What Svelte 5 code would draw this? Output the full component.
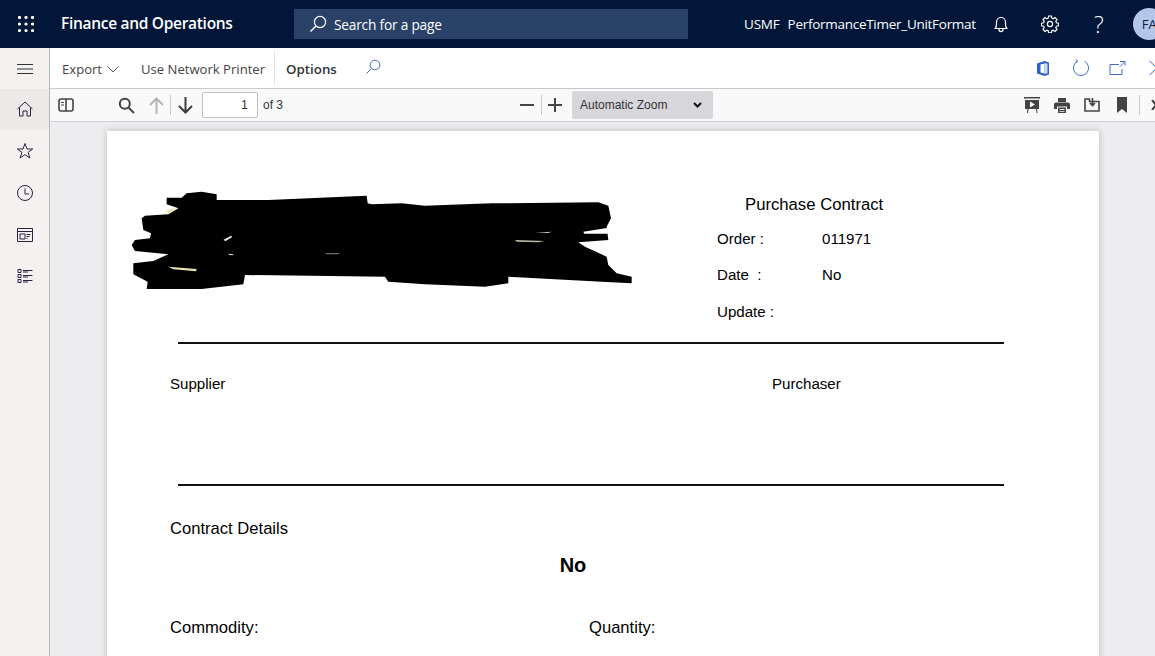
<script>
  const railIcons = ['home', 'star', 'clock', 'card', 'list'];
</script>

<div class="shell">
  <header class="topbar">
    <button class="waffle" aria-label="Apps">
      <svg width="16" height="16" viewBox="0 0 16 16" fill="#fff">
        {#each [1.5, 8, 14.5] as y}
          {#each [1.5, 8, 14.5] as x}
            <circle cx={x} cy={y} r="1.6" />
          {/each}
        {/each}
      </svg>
    </button>
    <div class="brand">Finance and Operations</div>
    <div class="search">
      <svg width="18" height="18" viewBox="0 0 18 18" fill="none" stroke="#fff" stroke-width="1.2">
        <circle cx="11" cy="7" r="5.6" />
        <path d="M7 11 1.5 16.5" stroke-width="1.5" />
      </svg>
      <span>Search for a page</span>
    </div>
    <div class="legal">USMF</div>
    <div class="report">PerformanceTimer_UnitFormat</div>
    <svg class="bell" width="16" height="18" viewBox="0 0 16 18" fill="none" stroke="#fff" stroke-width="1.2">
      <path d="M2.2 13.5c1-1.2 1.3-2.2 1.3-4.5V7a4.5 4.5 0 0 1 9 0v2c0 2.3.3 3.3 1.3 4.5z" />
      <path d="M6 14v.6a2 2 0 0 0 4 0V14" />
    </svg>
    <svg class="gear" width="18" height="18" viewBox="0 0 18 18" fill="none" stroke="#fff" stroke-width="1.2">
      <circle cx="9" cy="9" r="2.6" />
      <path d="M7.6 1h2.8l.4 2.2 1.4.6L14 2.6l2 2-1.2 1.8.6 1.4 2.1.4v2.6l-2.1.4-.6 1.4 1.2 1.8-2 2-1.8-1.2-1.4.6-.4 2.1H7.6l-.4-2.1-1.4-.6L4 16.4l-2-2 1.2-1.8-.6-1.4-2.1-.4V8.200l2.100-.4.6-1.400L2 4.600l2-2 1.800 1.200 1.400-.6z" />
    </svg>
    <div class="help">?</div>
    <div class="avatar">FA</div>
  </header>

  <div class="body">
    <nav class="rail">
      <button class="hamburger" aria-label="Menu">
        <svg width="16" height="10" viewBox="0 0 16 10" stroke="#333" stroke-width="1"><path d="M0 .5h16M0 5h16M0 9.500h16" /></svg>
      </button>
      {#each railIcons as icon, i}
        <div class="rail-item" class:active={i === 0}>
          <svg width="18" height="18" viewBox="0 0 18 18" fill="none" stroke="#2b2240" stroke-width="1">
            {#if icon === 'home'}
              <path d="M1.500 9 9 2l7.500 7M3.500 7.500V16H7v-5h4v5h3.500V7.500" />
            {:else if icon === 'star'}
              <path d="M9 1.500 11 7h5.700l-4.600 3.400 1.800 5.600L9 12.600 4.100 16l1.800-5.600L1.300 7H7z" />
            {:else if icon === 'clock'}
              <circle cx="9" cy="9" r="7.500" /><path d="M9 4.500V10h4" />
            {:else if icon === 'card'}
              <path d="M1.500 2.500h15v13h-15zM1.500 5.500h15M4 8h5v5H4zM10.500 8.500h4M10.500 10.500h3M10.500 12.500h1" />
            {:else}
              <path d="M2 2.500h3v3H2zM2 7.500h3v3H2zM2 12.500h3v3H2zM7 3.500h9.500M7 5h5M7 8.500h9.500M7 10h5M7 13.500h9.500M7 15h5" />
            {/if}
          </svg>
        </div>
      {/each}
    </nav>

    <main class="content">
      <div class="cmdbar">
        <div class="cmd export">Export
          <svg width="12" height="7" viewBox="0 0 12 7" fill="none" stroke="#555" stroke-width="1"><path d="M.5.500 6 6l5.500-5.500" /></svg>
        </div>
        <div class="cmd printer">Use Network Printer</div>
        <div class="cmd options">Options</div>
        <svg class="findicon" width="16" height="16" viewBox="0 0 16 16" fill="none" stroke="#4a6fc0" stroke-width="1">
          <circle cx="10" cy="6" r="4.800" /><path d="M6.500 9.500 1.500 14.500" />
        </svg>
        <div class="grow"></div>
        <svg class="acticon office" width="12" height="15" viewBox="0 0 12 15">
          <path d="M0 2.500 7.500 0 12 1.500v12L7.500 15 0 12.500z" fill="#2b62c4" />
          <path d="M3.500 3.500 7.500 2.500v10l-4-1z" fill="#fff" />
          <path d="M7.500 2l3 .8v9.400l-3 .8z" fill="#cddcf3" />
        </svg>
        <svg class="acticon refresh" width="18" height="18" viewBox="0 0 18 18" fill="none" stroke="#3f6fca" stroke-width="1">
          <path d="M5.500 2.200a7.600 7.600 0 1 0 7 0" /><path d="M4.500 .5 5.700 2.400 3.600 3.400" />
        </svg>
        <svg class="acticon popout" width="17" height="15" viewBox="0 0 17 15" fill="none" stroke="#3f6fca" stroke-width="1">
          <path d="M10 3.500H1v10h12V8M11 .5h5v4M16 .5l-5 5" />
        </svg>
        <svg class="closeicon" width="8" height="16" viewBox="0 0 8 16" fill="none" stroke="#3f6fca" stroke-width="1"><path d="M.5 1 8 8 .5 15" /></svg>
      </div>

      <div class="pdfbar">
        <svg class="p-side" width="16" height="14" viewBox="0 0 16 14" fill="none" stroke="#444" stroke-width="1.600">
          <rect x="1" y="1" width="14" height="12" rx="2" /><path d="M8 1v12" /><path d="M3 4.500h3M3 7h3" stroke-width="1" />
        </svg>
        <svg class="p-find" width="17" height="17" viewBox="0 0 17 17" fill="none" stroke="#444" stroke-width="2">
          <circle cx="6.800" cy="6.800" r="5" /><path d="m10.500 10.500 5.500 5.500" />
        </svg>
        <svg class="p-up" width="15" height="17" viewBox="0 0 15 17" fill="none" stroke="#b4b4b6" stroke-width="2"><path d="M7.500 17V2M1 8l6.500-6.500L14 8" /></svg>
        <span class="sep p-sep1"></span>
        <svg class="p-down" width="15" height="17" viewBox="0 0 15 17" fill="none" stroke="#3c3c3e" stroke-width="2"><path d="M7.500 0v15M1 9l6.500 6.500L14 9" /></svg>
        <div class="pageinput">1</div>
        <span class="ofpages">of 3</span>
        <svg class="p-minus" width="14" height="2" viewBox="0 0 14 2"><path d="M0 1h14" stroke="#444" stroke-width="2" /></svg>
        <span class="sep p-sep2"></span>
        <svg class="p-plus" width="14" height="14" viewBox="0 0 14 14" stroke="#444" stroke-width="2"><path d="M0 7h14M7 0v14" /></svg>
        <div class="zoom">
          <span>Automatic Zoom</span>
          <svg width="9" height="6" viewBox="0 0 9 6" fill="none" stroke="#111" stroke-width="2"><path d="m1 1 3.500 3.500L8 1" /></svg>
        </div>
        <div class="grow"></div>
        <svg class="p-tool" width="16" height="16" viewBox="0 0 16 16" fill="#444">
          <path d="M0 0h16v1.500H0zM1 3h14v9H1zM3 14l.5-2h1L4 16H3zM12 12h1l.5 4h-1z" /><path d="m6 4.500 5 3-5 3z" fill="#f9f9fa" />
        </svg>
        <svg class="p-tool" width="16" height="15" viewBox="0 0 16 15" fill="#444">
          <path d="M4 0h8v4H4zM2 4.500h12a2 2 0 0 1 2 2V11h-3V8.500H3V11H0V6.500a2 2 0 0 1 2-2zM4 9.500h8V15H4z" />
          <path d="M5.500 11h5v1h-5zM5.500 13h5v.8h-5z" fill="#f9f9fa" />
        </svg>
        <svg class="p-tool" width="16" height="14" viewBox="0 0 16 14" fill="none" stroke="#444" stroke-width="1.600">
          <path d="M5.500 3.500H15v9.500H1V1h4.500zM8.500 0v7M6 5l2.500 2.500L11 5" />
        </svg>
        <svg class="p-mark" width="10" height="16" viewBox="0 0 10 16" fill="#444"><path d="M0 0h10v16L5 12l-5 4z" /></svg>
        <span class="sep p-sep3"></span>
        <svg class="p-x" width="8" height="10" viewBox="0 0 8 10" stroke="#333" stroke-width="2"><path d="m1 0 8 10M9 0 1 10" /></svg>
      </div>

      <div class="viewer">
        <article class="page">
          <svg class="redact" width="520" height="115" viewBox="0 0 1560 345" fill="#000">
            <path d="M125 38 170 38 185 25 230 20 275 28 275 45 430 45 725 32 728 55 740 58 830 55 900 62 1100 55 1420 52 1450 62 1458 100 1445 125 1450 165 1360 172 1380 185 1445 215 1450 240 1475 265 1520 275 1520 295 1430 290 1150 275 1150 295 1080 305 900 298 790 290 780 275 360 270 355 298 230 312 65 312 68 290 25 268 25 235 85 228 130 208 30 198 20 180 30 165 75 160 78 145 55 135 50 100 60 92 130 88 160 70 125 58Z" />
            <path d="M1375 140 1450 128 1448 146 1378 146Z" fill="#fff" />
            <path d="M130 245 215 252 213 259 145 253Z" fill="#e9dfb0" />
            <path d="M125 75 155 68 130 88Z" fill="#e9dfb0" />
            <path d="M295 165 318 152 322 156 302 168Z" fill="#f4f0de" />
            <path d="M1170 165 1260 168 1240 172 1175 170Z" fill="#bdb9a8" />
            <path d="M1230 143 1280 140 1270 144Z" fill="#cfcbb8" />
            <path d="M600 205 645 205 640 208 605 208Z" fill="#8d8b7c" />
            <path d="M310 206 325 208 325 211 312 210Z" fill="#d9d5c0" />
          </svg>

          <section class="head">
            <div class="doc">
              <h1>Purchase Contract</h1>
              <div class="field"><span>Order :</span><span>011971</span></div>
              <div class="field"><span>Date&nbsp; :</span><span>No</span></div>
              <div class="field"><span>Update :</span><span></span></div>
            </div>
          </section>
          <hr />
          <section class="parties">
            <span>Supplier</span>
            <span>Purchaser</span>
          </section>
          <hr class="second" />
          <h2>Contract Details</h2>
          <div class="no">No</div>
          <section class="terms">
            <span>Commodity:</span>
            <span>Quantity:</span>
          </section>
        </article>
      </div>
    </main>
  </div>
</div>

<style>
  :global(body) { margin: 0; overflow: hidden; }
  .shell { width: 1155px; height: 656px; display: flex; flex-direction: column; overflow: hidden; font-family: "Open Sans", "Noto Sans", sans-serif; }
  button { background: none; border: 0; padding: 0; display: flex; align-items: center; justify-content: center; }
  svg { flex: none; display: block; }
  .grow { flex: 1; }

  .topbar { height: 48px; flex: none; background: #011638; color: #fff; display: flex; align-items: center; white-space: nowrap; }
  .topbar > * { flex: none; }
  .waffle { width: 17px; margin-left: 17px; }
  .brand { margin-left: 27px; width: 233px; font-size: 15.500px; font-weight: 600; letter-spacing: -0.300px; margin-top: -2px; }
  .search { width: 394px; height: 30px; background: #2a4168; display: flex; align-items: center; box-sizing: border-box; padding-left: 15px; gap: 7px; font-size: 13.700px; letter-spacing: -0.200px; }
  .search span { margin-top: 1px; }
  .legal { margin-left: 56px; font-size: 13.500px; letter-spacing: -0.200px; }
  .report { margin-left: 8px; font-size: 13.500px; letter-spacing: -0.280px; }
  .bell { margin-left: 17px; }
  .gear { margin-left: 32px; }
  .help { margin-left: 34px; width: 12px; font-size: 23px; font-weight: 300; font-family: "Open Sans", sans-serif; text-align: center; }
  .avatar { margin-left: 28px; width: 32px; height: 32px; border-radius: 50%; background: #b4c7ea; color: #0b1d3a; font-size: 13px; line-height: 32px; text-indent: 9px; overflow: hidden; }

  .body { flex: 1; display: flex; min-height: 0; }
  .rail { width: 49px; flex: none; background: #f3f2f1; border-right: 1px solid #b9b9b9; border-left: 1px solid #3a3a44; margin-left: -1px; display: flex; flex-direction: column; }
  .hamburger { height: 42px; width: 100%; flex: none; }
  .rail-item { height: 41.750px; flex: none; display: flex; align-items: center; justify-content: center; }
  .rail-item.active { background: #ebeae9; margin-top: -1.500px; }

  .content { flex: 1; min-width: 0; display: flex; flex-direction: column; background: #ededf0; }
  .cmdbar { height: 41px; flex: none; box-sizing: border-box; background: #fff; border-bottom: 1px solid #c8c8c8; display: flex; align-items: center; color: #444; font-size: 13.100px; white-space: nowrap; }
  .cmd { display: flex; align-items: center; height: 100%; box-sizing: border-box; padding-top: 2px; }
  .export { margin-left: 12px; gap: 5px; }
  .printer { margin-left: 22px; padding-right: 10px; position: relative; }
  .printer::after { content: ""; position: absolute; right: 0; top: 3px; bottom: 3px; width: 1px; background: #e4e4e4; }
  .options { margin-left: 11px; font-size: 13.300px; font-weight: 600; color: #333; }
  .findicon { margin-left: 28px; margin-top: -2px; }
  .office { margin-right: 23px; }
  .refresh { margin-right: 19px; }
  .popout { margin-right: 23px; }
  .closeicon { margin-right: -2px; }

  .pdfbar { height: 33px; flex: none; box-sizing: border-box; background: #f9f9fa; border-bottom: 1px solid #cfcfd8; display: flex; align-items: center; color: #333; font-family: "Liberation Sans", Arial, sans-serif; font-size: 12px; white-space: nowrap; }
  .p-side { margin-left: 8px; }
  .p-find { margin-left: 44px; }
  .p-up { margin-left: 14px; }
  .sep { width: 1px; height: 20px; background: #c8c8cc; flex: none; }
  .p-sep1 { margin-left: 6px; }
  .p-down { margin-left: 7px; }
  .pageinput { margin-left: 9px; width: 56px; height: 26px; box-sizing: border-box; border: 1px solid #c0c0c4; border-radius: 2px; background: #fff; text-align: right; line-height: 24px; padding-right: 9px; font-size: 12.500px; }
  .ofpages { margin-left: 5px; }
  .p-minus { margin-left: 237px; }
  .p-sep2 { margin-left: 7px; }
  .p-plus { margin-left: 6px; }
  .zoom { margin-left: 10px; width: 141px; height: 28px; box-sizing: border-box; background: #d7d7db; border-radius: 2px; padding: 0 11px 0 8px; display: flex; align-items: center; justify-content: space-between; }
  .p-tool { margin-right: 14px; }
  .p-mark { margin-left: 3px; }
  .p-sep3 { margin-left: 12px; }
  .p-x { margin-left: 11px; margin-right: -4px; }

  .viewer { flex: 1; min-height: 0; overflow: hidden; padding: 9px 0 0 57px; }
  .page { position: relative; width: 992px; height: 800px; box-sizing: border-box; background: #fff; box-shadow: 0 0 6px 1px rgba(0, 0, 0, .16); color: #000; font-family: "Liberation Sans", Arial, sans-serif; padding-top: 64px; }
  .redact { position: absolute; left: 18px; top: 54px; }
  .head { height: 147px; display: flex; }
  .doc { margin-left: 610px; padding-top: 1px; font-size: 15.100px; }
  h1 { margin: 0 0 15px 28px; font-weight: 400; font-size: 16.700px; line-height: 18px; }
  .field { display: flex; height: 36.400px; line-height: 20px; }
  .field span:first-child { width: 105px; }
  hr { margin: 0 95px 0 71px; border: 0; height: 2px; background: #111; }
  .parties { height: 140px; box-sizing: border-box; padding: 31px 0 0 63px; font-size: 15.100px; display: flex; line-height: 18px; }
  .parties span:first-child { width: 602px; }
  h2 { margin: 33px 0 0 63px; font-size: 16.600px; font-weight: 400; line-height: 20px; }
  .no { margin: 14px 0 0; width: 932px; text-align: center; font-weight: 700; font-size: 20px; line-height: 24px; }
  .terms { margin-top: 41px; padding-left: 63px; display: flex; font-size: 16.600px; line-height: 20px; }
  .terms span:first-child { width: 419px; }
</style>
